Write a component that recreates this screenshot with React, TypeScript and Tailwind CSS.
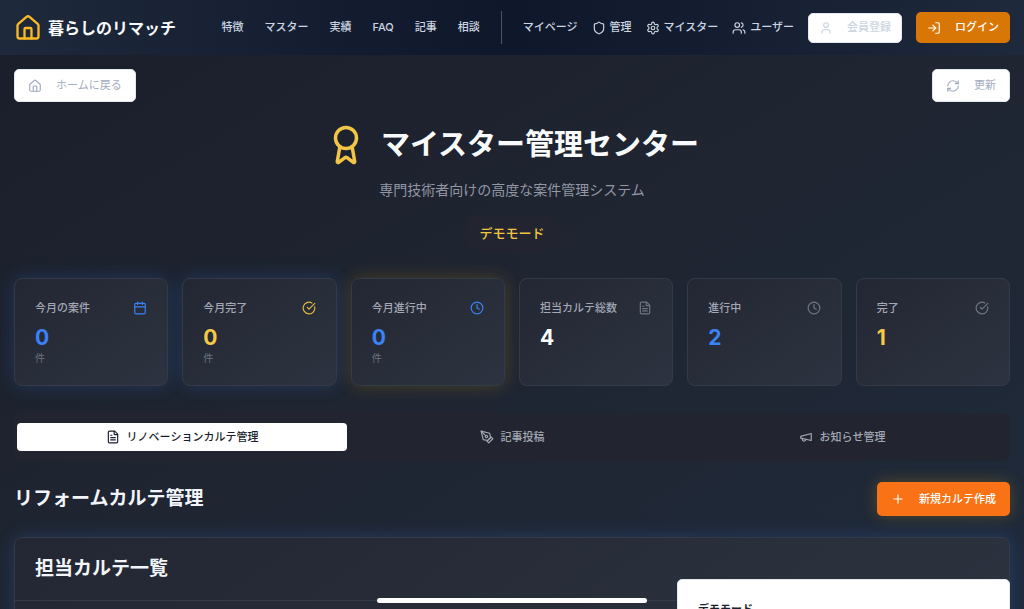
import type { ReactNode } from "react";
import {
  Award,
  Calendar,
  CircleCheckBig,
  Clock,
  FileText,
  House,
  LogIn,
  Plus,
  RefreshCw,
  Shield,
  User,
  Users,
} from "lucide-react";

const strokeProps = {
  viewBox: "0 0 24 24",
  fill: "none",
  stroke: "currentColor",
  strokeWidth: 2,
  strokeLinecap: "round" as const,
  strokeLinejoin: "round" as const,
  "aria-hidden": true,
};

type IconType = (props: { className?: string }) => ReactNode;

function Gear({ className }: { className?: string }) {
  return (
    <svg {...strokeProps} className={className}>
      <path d="M12.22 2h-.44a2 2 0 0 0-2 2v.18a2 2 0 0 1-1 1.73l-.43.25a2 2 0 0 1-2 0l-.15-.08a2 2 0 0 0-2.73.73l-.22.38a2 2 0 0 0 .73 2.73l.15.1a2 2 0 0 1 1 1.72v.51a2 2 0 0 1-1 1.74l-.15.09a2 2 0 0 0-.73 2.73l.22.38a2 2 0 0 0 2.73.73l.15-.08a2 2 0 0 1 2 0l.43.25a2 2 0 0 1 1 1.73V20a2 2 0 0 0 2 2h.44a2 2 0 0 0 2-2v-.18a2 2 0 0 1 1-1.73l.43-.25a2 2 0 0 1 2 0l.15.08a2 2 0 0 0 2.73-.73l.22-.39a2 2 0 0 0-.73-2.73l-.15-.08a2 2 0 0 1-1-1.74v-.5a2 2 0 0 1 1-1.74l.15-.09a2 2 0 0 0 .73-2.73l-.22-.38a2 2 0 0 0-2.73-.73l-.15.08a2 2 0 0 1-2 0l-.43-.25a2 2 0 0 1-1-1.73V4a2 2 0 0 0-2-2z" />
      <circle cx="12" cy="12" r="3" />
    </svg>
  );
}

function PenNib() {
  return (
    <svg {...strokeProps} className="size-3.5">
      <path d="m12 19 7-7 3 3-7 7-3-3z" />
      <path d="m18 13-1.5-7.5L2 2l3.5 14.5L13 18l5-5z" />
      <path d="m2 2 7.586 7.586" />
      <circle cx="11" cy="11" r="2" />
    </svg>
  );
}

function Horn() {
  return (
    <svg {...strokeProps} className="size-3.5">
      <path d="m3 11 18-5v12L3 14v-3z" />
      <path d="M11.6 16.8a3 3 0 1 1-5.8-1.6" />
    </svg>
  );
}

const mainLinks = ["特徴", "マスター", "実績", "FAQ", "記事", "相談"];

const userLinks: { label: string; icon?: IconType }[] = [
  { label: "マイページ" },
  { label: "管理", icon: Shield as unknown as IconType },
  { label: "マイスター", icon: Gear },
  { label: "ユーザー", icon: Users as unknown as IconType },
];

type Stat = {
  label: string;
  value: number;
  unit?: string;
  icon: typeof Clock;
  iconColor: string;
  valueColor: string;
  glow: string;
};

const blueGlow = "shadow-[0_0_18px_rgba(59,130,246,0.22)]";
const amberGlow = "shadow-[0_0_18px_rgba(234,179,8,0.2)]";

const stats: Stat[] = [
  { label: "今月の案件", value: 0, unit: "件", icon: Calendar, iconColor: "text-[#3b82f6]", valueColor: "text-[#3b82f6]", glow: blueGlow },
  { label: "今月完了", value: 0, unit: "件", icon: CircleCheckBig, iconColor: "text-[#e0b93c]", valueColor: "text-[#f6c945]", glow: blueGlow },
  { label: "今月進行中", value: 0, unit: "件", icon: Clock, iconColor: "text-[#3b82f6]", valueColor: "text-[#3b82f6]", glow: amberGlow },
  { label: "担当カルテ総数", value: 4, icon: FileText, iconColor: "text-[#717682]", valueColor: "text-white", glow: "" },
  { label: "進行中", value: 2, icon: Clock, iconColor: "text-[#717682]", valueColor: "text-[#3b82f6]", glow: "" },
  { label: "完了", value: 1, icon: CircleCheckBig, iconColor: "text-[#717682]", valueColor: "text-[#f6c945]", glow: "" },
];

function Panel({ glow, className, children }: { glow: string; className: string; children: ReactNode }) {
  return (
    <div
      className={`rounded-lg border border-[#353a47] bg-linear-145 from-[#232733] to-[#2d3340] ${glow} ${className}`}
    >
      {children}
    </div>
  );
}

function Header() {
  return (
    <header className="flex h-[55px] items-center justify-between bg-linear-to-r from-[#1e293b] via-[#0f172a] to-[#1e293b] px-3.5 text-[11px] font-medium whitespace-nowrap text-[#cbd5e1]">
      <a href="#" className="flex items-center gap-1.5 text-base font-bold text-[#f8fafc]">
        <House className="size-7 text-[#fbb924]" />
        暮らしのリマッチ
      </a>
      <div className="flex items-center">
        <nav className="flex items-center gap-[21px]">
          {mainLinks.map((label) => (
            <a key={label} href="#">
              {label}
            </a>
          ))}
        </nav>
        <nav className="ml-[21px] flex items-center gap-3.5 border-l border-[#475569] py-2 pl-[21px]">
          {userLinks.map(({ label, icon: Icon }) => (
            <a key={label} href="#" className="flex items-center gap-1">
              {Icon && <Icon className="size-3.5" />}
              {label}
            </a>
          ))}
        </nav>
        <button className="ml-3.5 flex h-[30px] items-center gap-3.5 rounded-[5px] border border-[#e2e8f0] bg-white px-2.5 text-[#cbd5e1]">
          <User className="size-3.5" />
          会員登録
        </button>
        <button className="ml-3.5 flex h-[31px] items-center gap-3.5 rounded-[5px] bg-[#d97706] px-[11px] text-white">
          <LogIn className="size-3.5" />
          ログイン
        </button>
      </div>
    </header>
  );
}

function StatCard({ stat }: { stat: Stat }) {
  const Icon = stat.icon;
  return (
    <Panel glow={stat.glow} className="p-5">
      <div className="flex items-center justify-between text-[11px] leading-[18px] font-medium text-[#a3a8b5]">
        {stat.label}
        <Icon className={`size-3.5 ${stat.iconColor}`} />
      </div>
      <p className={`mt-2 text-[21px] leading-[26px] font-bold ${stat.valueColor}`}>{stat.value}</p>
      {stat.unit && <p className="text-[10px] leading-3.5 text-[#6b7280]">{stat.unit}</p>}
    </Panel>
  );
}

function Tabs() {
  const tab = "flex h-7 items-center justify-center gap-[7px] rounded";
  return (
    <div
      role="tablist"
      className="mt-[27px] grid grid-cols-3 rounded-lg bg-[#22252f] px-[3px] py-2.5 text-[11px] font-medium text-[#a3a8b5]"
    >
      <button role="tab" aria-selected="true" className={`${tab} bg-white text-[#1a1f2e]`}>
        <FileText className="size-3.5" />
        リノベーションカルテ管理
      </button>
      <button role="tab" aria-selected="false" className={tab}>
        <PenNib />
        記事投稿
      </button>
      <button role="tab" aria-selected="false" className={tab}>
        <Horn />
        お知らせ管理
      </button>
    </div>
  );
}

export default function App() {
  const outline =
    "flex h-[33px] items-center gap-3.5 rounded-[5px] border border-[#e2e8f0] bg-white px-[13px] text-[#a3adc0]";
  return (
    <div className="h-screen overflow-hidden bg-linear-to-br from-[#1a1e2a] via-[#1f2531] to-[#1f2a3b] font-['Inter','Noto_Sans_CJK_JP',sans-serif] text-white">
      <Header />
      <main className="p-3.5">
        <div className="flex justify-between text-[11px]">
          <button className={outline}>
            <House className="size-3.5" />
            ホームに戻る
          </button>
          <button className={outline}>
            <RefreshCw className="size-3.5" />
            更新
          </button>
        </div>

        <div className="mt-[22px] flex flex-col items-center">
          <h1 className="flex items-center gap-3.5 text-[29px] leading-[42px] font-bold text-[#f8fafc]">
            <Award className="size-[42px] text-[#f3c546]" />
            マイスター管理センター
          </h1>
          <p className="mt-3 text-sm leading-[23px] text-[#9297a5]">
            専門技術者向けの高度な案件管理システム
          </p>
          <p className="mt-[15px] rounded-xl bg-[#22252f] px-3.5 text-[13px] leading-[34px] font-medium text-[#f0c542]">
            デモモード
          </p>
        </div>

        <section className="mt-7 grid grid-cols-6 gap-3.5">
          {stats.map((stat) => (
            <StatCard key={stat.label} stat={stat} />
          ))}
        </section>

        <Tabs />

        <div className="mt-[21px] flex items-center justify-between">
          <h2 className="text-[19px] leading-7 font-bold text-[#f1f5f9]">リフォームカルテ管理</h2>
          <button className="flex h-[34px] items-center gap-3.5 rounded-[5px] bg-[#f97316] px-3.5 text-[11px] font-medium text-white shadow-[0_0_16px_rgba(234,179,8,0.25)]">
            <Plus className="size-3.5" />
            新規カルテ作成
          </button>
        </div>

        <Panel glow={blueGlow} className="mt-[21px] pb-24">
          <h3 className="border-b border-[#353a47] px-5 pt-[17px] pb-[17px] text-[19px] leading-7 font-bold text-[#f1f5f9]">
            担当カルテ一覧
          </h3>
        </Panel>
      </main>

      <div
        role="status"
        className="fixed right-3.5 -bottom-12 h-[78px] w-[333px] rounded-[5px] border border-[#e2e8f0] bg-white px-5 pt-5 text-[11px] leading-[18px] font-bold text-[#1a1f2e]"
      >
        デモモード
      </div>
      <div className="fixed bottom-1.5 left-1/2 h-[5px] w-[270px] -translate-x-1/2 rounded-full bg-white" />
    </div>
  );
}
